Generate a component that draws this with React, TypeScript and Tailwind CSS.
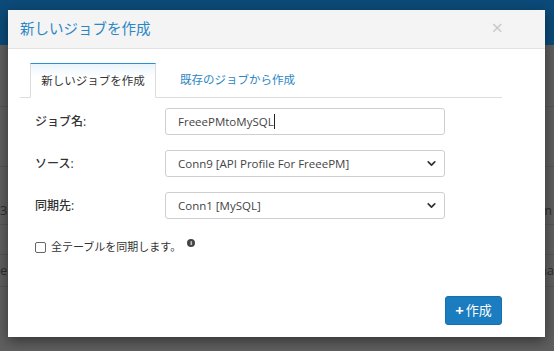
import { ChevronDown } from "lucide-react";

const font = { fontFamily: '"Open Sans", "Noto Sans CJK JP", sans-serif' };

export default function App() {
  return (
    <div className="relative w-[554px] h-[351px] overflow-hidden bg-[#5f5f5f]" style={font}>
      {/* dimmed page behind */}
      <div className="h-[45px] bg-[#0c4a79]" />
      <div className="flex flex-col text-[13px] text-[#2e2e2e]">
        <div className="h-[62px] border-b border-[#555]" />
        <div className="h-[60px] border-b border-[#555]" />
        <div className="h-[58px] border-b border-[#555] flex items-end pb-1">
          <span>3</span>
          <span className="ml-auto mr-[2px]">m</span>
        </div>
        <div className="h-[30px] border-b border-[#555]" />
        <div className="h-[32px] border-b border-[#555] flex items-center">
          <span>el</span>
          <span className="ml-auto">na</span>
        </div>
      </div>

      {/* modal */}
      <div className="absolute left-[8px] top-[10px] w-[537px] h-[327px] bg-white shadow-[0_4px_12px_rgba(0,0,0,0.45)] flex flex-col">
        <div className="h-[39px] bg-[#f4f4f4] border-b border-[#e2e2e2] flex items-center justify-between pl-[12px] pr-[42px]">
          <span className="text-[14.5px] text-[#2b86c5]">新しいジョブを作成</span>
          <span className="text-[20px] leading-none text-[#c8c8c8] -mt-[2px]">×</span>
        </div>

        <div className="flex-1 flex flex-col pl-[12px] pr-[43px] pt-[14px]">
          <div className="flex border-b border-[#dcdcdc] pl-[10px] h-[35px]">
            <div className="w-[126px] h-[35px] -mb-px border border-[#dcdcdc] border-t-[#2b8fd6] border-b-white bg-gradient-to-b from-[#eaf5fc] to-white to-[40%] flex items-center justify-center text-[11.5px] text-[#333]">
              新しいジョブを作成
            </div>
            <div className="pl-[24px] flex items-center text-[11.5px] text-[#2b86c5]">既存のジョブから作成</div>
          </div>

          <div className="flex flex-col pl-[15px] pt-[10px] gap-[15px] text-[12px] text-[#333]">
            <div className="flex items-center h-[27px]">
              <span className="w-[130px] font-medium">ジョブ名:</span>
              <div className="w-[280px] h-[27px] border border-[#cfcfcf] rounded-[3px] flex items-center px-[12px] text-[11.5px] text-[#444]">
                FreeePMtoMySQL<span className="w-px h-[15px] bg-[#222]" />
              </div>
            </div>
            <div className="flex items-center h-[27px]">
              <span className="w-[130px] font-medium">ソース:</span>
              <div className="w-[280px] h-[27px] border border-[#cfcfcf] rounded-[3px] flex items-center pl-[12px] pr-[6px] text-[11.5px] text-[#444]">
                <span className="flex-1">Conn9 [API Profile For FreeePM]</span>
                <ChevronDown size={13} strokeWidth={3.2} className="text-[#333]" />
              </div>
            </div>
            <div className="flex items-center h-[27px]">
              <span className="w-[130px] font-medium">同期先:</span>
              <div className="w-[280px] h-[27px] border border-[#cfcfcf] rounded-[3px] flex items-center pl-[12px] pr-[6px] text-[11.5px] text-[#444]">
                <span className="flex-1">Conn1 [MySQL]</span>
                <ChevronDown size={13} strokeWidth={3.2} className="text-[#333]" />
              </div>
            </div>
            <div className="flex items-center mt-[3px] h-[20px]">
              <span className="w-[11px] h-[11px] border border-[#666] rounded-[2px] mr-[5px]" />
              <span className="text-[11px]">全テーブルを同期します。</span>
              <span className="ml-[6px] -mt-[8px] w-[8px] h-[8px] rounded-full bg-[#444] text-white text-[6px] leading-[8px] text-center font-bold">i</span>
            </div>
          </div>

          <div className="mt-auto mb-[12px] flex justify-end">
            <button className="w-[57px] h-[29px] rounded-[3px] bg-[#1b7dbf] border border-[#1770ad] text-white text-[13px] flex items-center justify-center gap-[2px]">
              <span className="text-[15px] font-bold leading-none">+</span>作成
            </button>
          </div>
        </div>
      </div>
    </div>
  );
}
